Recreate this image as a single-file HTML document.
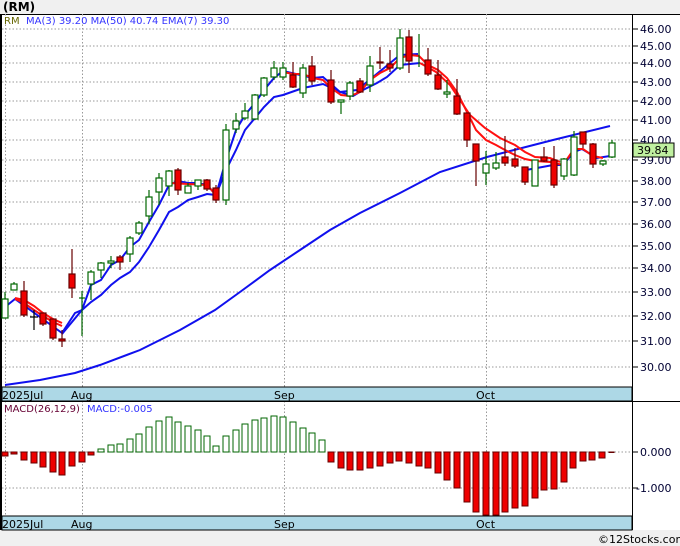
<!DOCTYPE html>
<html><head><meta charset="utf-8"><style>
html,body{margin:0;padding:0;background:#f0f0f0;}
svg{display:block;font-family:"DejaVu Sans","Liberation Sans",sans-serif;}
</style></head><body>
<svg width="680" height="546" viewBox="0 0 680 546" xmlns="http://www.w3.org/2000/svg">
<rect x="0" y="0" width="680" height="546" fill="#f0f0f0"/>
<text x="3" y="11" font-size="12" font-weight="bold" fill="#000">(RM)</text>
<rect x="0" y="14" width="680" height="516" fill="#fff"/>
<line x1="0" y1="14.5" x2="680" y2="14.5" stroke="#000"/>
<line x1="1" y1="14" x2="1" y2="530" stroke="#000" stroke-width="2"/>
<line x1="632.5" y1="14" x2="632.5" y2="530" stroke="#000"/>
<!-- grid price -->
<g stroke="#999" stroke-dasharray="1.5,2" stroke-width="1">
<line x1="2" x2="632" y1="29" y2="29"/><line x1="2" x2="632" y1="46" y2="46"/><line x1="2" x2="632" y1="63" y2="63"/>
<line x1="2" x2="632" y1="82" y2="82"/><line x1="2" x2="632" y1="101" y2="101"/><line x1="2" x2="632" y1="120" y2="120"/>
<line x1="2" x2="632" y1="140" y2="140"/><line x1="2" x2="632" y1="160" y2="160"/><line x1="2" x2="632" y1="181" y2="181"/>
<line x1="2" x2="632" y1="202" y2="202"/><line x1="2" x2="632" y1="224" y2="224"/><line x1="2" x2="632" y1="246" y2="246"/>
<line x1="2" x2="632" y1="268" y2="268"/><line x1="2" x2="632" y1="292" y2="292"/><line x1="2" x2="632" y1="316" y2="316"/>
<line x1="2" x2="632" y1="341" y2="341"/><line x1="2" x2="632" y1="367" y2="367"/>
<line x1="5.5" x2="5.5" y1="14" y2="387"/><line x1="82.5" x2="82.5" y1="14" y2="387"/><line x1="284.5" x2="284.5" y1="14" y2="387"/><line x1="486.5" x2="486.5" y1="14" y2="387"/>
<line x1="5.5" x2="5.5" y1="401" y2="516"/><line x1="82.5" x2="82.5" y1="401" y2="516"/><line x1="284.5" x2="284.5" y1="401" y2="516"/><line x1="486.5" x2="486.5" y1="401" y2="516"/>
<line x1="2" x2="632" y1="452" y2="452"/><line x1="2" x2="632" y1="488" y2="488"/>
</g>
<!-- axis labels -->
<g font-size="11" fill="#000033">
<text x="640" y="33">46.00</text><text x="640" y="50">45.00</text><text x="640" y="67">44.00</text>
<text x="640" y="86">43.00</text><text x="640" y="105">42.00</text><text x="640" y="124">41.00</text>
<text x="640" y="144">40.00</text><text x="640" y="164">39.00</text><text x="640" y="185">38.00</text>
<text x="640" y="206">37.00</text><text x="640" y="228">36.00</text><text x="640" y="250">35.00</text>
<text x="640" y="272">34.00</text><text x="640" y="296">33.00</text><text x="640" y="320">32.00</text>
<text x="640" y="345">31.00</text><text x="640" y="371">30.00</text>
<text x="640" y="456">0.000</text><text x="636" y="492">-1.000</text>
</g>
<g stroke="#000">
<line x1="632" x2="638" y1="29" y2="29"/><line x1="632" x2="638" y1="46" y2="46"/><line x1="632" x2="638" y1="63" y2="63"/><line x1="632" x2="638" y1="82" y2="82"/><line x1="632" x2="638" y1="101" y2="101"/><line x1="632" x2="638" y1="120" y2="120"/><line x1="632" x2="638" y1="140" y2="140"/><line x1="632" x2="638" y1="160" y2="160"/><line x1="632" x2="638" y1="181" y2="181"/><line x1="632" x2="638" y1="202" y2="202"/><line x1="632" x2="638" y1="224" y2="224"/><line x1="632" x2="638" y1="246" y2="246"/><line x1="632" x2="638" y1="268" y2="268"/><line x1="632" x2="638" y1="292" y2="292"/><line x1="632" x2="638" y1="316" y2="316"/><line x1="632" x2="638" y1="341" y2="341"/><line x1="632" x2="638" y1="367" y2="367"/>
<line x1="632" x2="638" y1="452" y2="452"/><line x1="632" x2="638" y1="488" y2="488"/>
</g>
<!-- date bands -->
<rect x="2" y="387" width="630" height="14" fill="#add8e6" stroke="#000"/>
<rect x="2" y="516" width="630" height="14" fill="#add8e6" stroke="#000"/>
<line x1="0" y1="401.5" x2="680" y2="401.5" stroke="#000"/>
<g font-size="11" fill="#000">
<text x="2" y="399">2025Jul</text><text x="71" y="399">Aug</text><text x="274" y="399">Sep</text><text x="476" y="399">Oct</text>
<text x="2" y="528">2025Jul</text><text x="71" y="528">Aug</text><text x="274" y="528">Sep</text><text x="476" y="528">Oct</text>
</g>
<text x="4" y="24" font-size="10" fill="#666600">RM</text>
<text x="26" y="24" font-size="10" fill="#3333ff">MA(3)  39.20   MA(50)  40.74   EMA(7)  39.30</text>
<text x="4" y="412" font-size="10" fill="#660033">MACD(26,12,9)</text>
<text x="87" y="412" font-size="10" fill="#3333ff">MACD:-0.005</text>
<text x="598" y="543" font-size="11" fill="#000">©12Stocks.com</text>
<!-- MA50 -->
<polyline fill="none" stroke="#1010ee" stroke-width="2" points="5,385 40,380 75,373 100,365 140,350 180,330 215,310 240,292 270,270 300,250 330,230 360,213 400,193 440,172 487,157 553,140 610,126"/>
<!-- slow blue -->
<polyline fill="none" stroke="#1010ee" stroke-width="2" points="62,334 72,322 82,310 91,302 101,295 111,285 120,278 130,272 139,262 149,247 159,230 169,212 178,207 188,200 198,197 207,194 216,195 226,170 236,150 245,130 255,118 264,107 274,97 283,95 303,88 323,84 340,92 353,96 363,90 377,83 387,77 400,65 420,63"/>
<!-- fast blue -->
<polyline fill="none" stroke="#1010ee" stroke-width="2" points="5,307 15,299 62,333 75,313 82,310 91,285 101,280 111,265 120,260 130,247 139,240 149,222 159,205 169,185 178,181 188,183 198,183 207,185 216,195 226,160 236,130 245,115 255,103 264,90 274,78 283,71 313,78 323,77 340,92 357,90 373,77 400,55 418,54"/>
<polyline fill="none" stroke="#1010ee" stroke-width="2" points="526,170 537,168 553,165 563,165 574,152 582,149 597,158 610,156"/>
<!-- red -->
<g fill="none" stroke="#ff1010" stroke-width="2">
<polyline points="15,298 24,300 34,306 43,313 53,319 62,323"/>
<polyline points="15,299 24,303 34,310 43,316 53,322 62,326"/>
<polyline points="170,183 188,184 207,185 216,195"/>
<polyline points="283,72 293,74 303,74 313,78 323,80 331,88 341,95 350,96 360,92 370,80 380,73 390,68 400,58 410,55 419,56 428,65 438,70 447,78 457,92 467,112 476,130 486,140 496,145 505,150 515,155 525,159 535,161 550,162 563,165 574,149 583,149 593,156 603,158"/>
<polyline points="420,63 436,72 450,85 460,100 470,115 485,128 500,138 515,145 525,152 535,157 550,158 560,162"/>
</g>
<!-- candles -->
<g stroke-width="1.2">
<g stroke="#006600" fill="#fff">
<line x1="5" x2="5" y1="292" y2="318"/><rect x="2" y="299" width="6" height="19"/>
<line x1="14" x2="14" y1="282" y2="290"/><rect x="11" y="284" width="6" height="6"/>
<line x1="82" x2="82" y1="291" y2="336"/><line x1="79" x2="85" y1="298" y2="298"/>
<line x1="91" x2="91" y1="270" y2="300"/><rect x="88" y="272" width="6" height="12"/>
<line x1="101" x2="101" y1="262" y2="278"/><rect x="98" y="263" width="6" height="7"/>
<line x1="111" x2="111" y1="256" y2="268"/><rect x="108" y="261" width="6" height="2"/>
<line x1="130" x2="130" y1="236" y2="262"/><rect x="127" y="238" width="6" height="16"/>
<line x1="139" x2="139" y1="221" y2="235"/><rect x="136" y="223" width="6" height="10"/>
<line x1="149" x2="149" y1="190" y2="224"/><rect x="146" y="197" width="6" height="19"/>
<line x1="159" x2="159" y1="173" y2="205"/><rect x="156" y="178" width="6" height="14"/>
<line x1="169" x2="169" y1="170" y2="196"/><rect x="166" y="171" width="6" height="15"/>
<line x1="188" x2="188" y1="183" y2="193"/><rect x="185" y="186" width="6" height="7"/>
<line x1="198" x2="198" y1="180" y2="190"/><rect x="195" y="180" width="6" height="6"/>
<line x1="226" x2="226" y1="124" y2="205"/><rect x="223" y="130" width="6" height="70"/>
<line x1="236" x2="236" y1="113" y2="133"/><rect x="233" y="121" width="6" height="8"/>
<line x1="245" x2="245" y1="103" y2="120"/><rect x="242" y="111" width="6" height="7"/>
<line x1="255" x2="255" y1="94" y2="120"/><rect x="252" y="95" width="6" height="24"/>
<line x1="264" x2="264" y1="77" y2="97"/><rect x="261" y="78" width="6" height="17"/>
<line x1="274" x2="274" y1="61" y2="80"/><rect x="271" y="68" width="6" height="9"/>
<line x1="283" x2="283" y1="62" y2="80"/><rect x="280" y="68" width="6" height="9"/>
<line x1="303" x2="303" y1="64" y2="98"/><rect x="300" y="68" width="6" height="25"/>
<line x1="341" x2="341" y1="100" y2="114"/><rect x="338" y="100" width="6" height="2"/>
<line x1="350" x2="350" y1="81" y2="100"/><rect x="347" y="83" width="6" height="13"/>
<line x1="370" x2="370" y1="56" y2="92"/><rect x="367" y="66" width="6" height="19"/>
<line x1="400" x2="400" y1="29" y2="70"/><rect x="397" y="38" width="6" height="30"/>
<line x1="419" x2="419" y1="34" y2="67"/>
<line x1="447" x2="447" y1="80" y2="98"/><rect x="444" y="92" width="6" height="2"/>
<line x1="486" x2="486" y1="151" y2="185"/><rect x="483" y="164" width="6" height="9"/>
<line x1="496" x2="496" y1="152" y2="170"/><rect x="493" y="163" width="6" height="5"/>
<line x1="535" x2="535" y1="160" y2="186"/><rect x="532" y="160" width="6" height="26"/>
<line x1="564" x2="564" y1="158" y2="180"/><rect x="561" y="159" width="6" height="17"/>
<line x1="574" x2="574" y1="131" y2="176"/><rect x="571" y="137" width="6" height="38"/>
<line x1="603" x2="603" y1="160" y2="166"/><rect x="600" y="161" width="6" height="3"/>
<line x1="612" x2="612" y1="140" y2="158"/><rect x="609" y="143" width="6" height="14"/>
</g>
<line x1="34" x2="34" y1="310" y2="330" stroke="#000"/><line x1="30" x2="38" y1="317" y2="317" stroke="#000"/>
<g stroke="#660000" fill="#ee0000">
<line x1="24" x2="24" y1="281" y2="317"/><rect x="21" y="291" width="6" height="24"/>
<line x1="43" x2="43" y1="313" y2="326"/><rect x="40" y="313" width="6" height="11"/>
<line x1="53" x2="53" y1="319" y2="340"/><rect x="50" y="319" width="6" height="19"/>
<line x1="62" x2="62" y1="330" y2="347"/><rect x="59" y="339" width="6" height="2"/>
<line x1="72" x2="72" y1="249" y2="298"/><rect x="69" y="274" width="6" height="14"/>
<line x1="120" x2="120" y1="255" y2="270"/><rect x="117" y="257" width="6" height="5"/>
<line x1="178" x2="178" y1="168" y2="195"/><rect x="175" y="170" width="6" height="20"/>
<line x1="207" x2="207" y1="179" y2="191"/><rect x="204" y="180" width="6" height="9"/>
<line x1="216" x2="216" y1="185" y2="203"/><rect x="213" y="188" width="6" height="12"/>
<line x1="293" x2="293" y1="62" y2="88"/><rect x="290" y="75" width="6" height="12"/>
<line x1="312" x2="312" y1="56" y2="85"/><rect x="309" y="66" width="6" height="15"/>
<line x1="331" x2="331" y1="70" y2="104"/><rect x="328" y="80" width="6" height="22"/>
<line x1="360" x2="360" y1="78" y2="93"/><rect x="357" y="81" width="6" height="11"/>
<line x1="380" x2="380" y1="47" y2="69"/><rect x="377" y="62" width="6" height="1"/>
<line x1="390" x2="390" y1="50" y2="72"/><rect x="387" y="64" width="6" height="4"/>
<line x1="409" x2="409" y1="30" y2="73"/><rect x="406" y="37" width="6" height="24"/>
<line x1="428" x2="428" y1="48" y2="76"/><rect x="425" y="60" width="6" height="14"/>
<line x1="438" x2="438" y1="60" y2="90"/><rect x="435" y="75" width="6" height="14"/>
<line x1="457" x2="457" y1="79" y2="115"/><rect x="454" y="96" width="6" height="18"/>
<line x1="467" x2="467" y1="113" y2="147"/><rect x="464" y="113" width="6" height="27"/>
<line x1="476" x2="476" y1="144" y2="186"/><rect x="473" y="144" width="6" height="17"/>
<line x1="505" x2="505" y1="136" y2="166"/><rect x="502" y="157" width="6" height="6"/>
<line x1="515" x2="515" y1="148" y2="168"/><rect x="512" y="159" width="6" height="7"/>
<line x1="525" x2="525" y1="167" y2="185"/><rect x="522" y="167" width="6" height="15"/>
<line x1="544" x2="544" y1="147" y2="162"/><rect x="541" y="157" width="6" height="4"/>
<line x1="554" x2="554" y1="146" y2="188"/><rect x="551" y="160" width="6" height="25"/>
<line x1="583" x2="583" y1="132" y2="148"/><rect x="580" y="132" width="6" height="12"/>
<line x1="593" x2="593" y1="143" y2="168"/><rect x="590" y="144" width="6" height="20"/>
</g>
</g>
<!-- current price box -->
<rect x="633" y="143" width="41" height="14" fill="#c0f0a0" stroke="#000"/>
<text x="637" y="154" font-size="11" fill="#000">39.84</text>
<!-- MACD bars -->
<g stroke-width="1">
<g stroke="#660000" fill="#ee0000">
<rect x="2" y="452" width="6" height="4"/><rect x="11" y="452" width="6" height="2"/><rect x="21" y="452" width="6" height="8"/><rect x="31" y="452" width="6" height="11"/><rect x="40" y="452" width="6" height="15"/><rect x="50" y="452" width="6" height="20"/><rect x="59" y="452" width="6" height="23"/><rect x="69" y="452" width="6" height="14"/><rect x="79" y="452" width="6" height="10"/><rect x="88" y="452" width="6" height="3"/>
<rect x="328" y="452" width="6" height="10"/><rect x="338" y="452" width="6" height="16"/><rect x="347" y="452" width="6" height="18"/><rect x="357" y="452" width="6" height="18"/><rect x="367" y="452" width="6" height="16"/><rect x="377" y="452" width="6" height="14"/><rect x="387" y="452" width="6" height="11"/><rect x="396" y="452" width="6" height="9"/><rect x="406" y="452" width="6" height="11"/><rect x="416" y="452" width="6" height="14"/><rect x="425" y="452" width="6" height="16"/><rect x="435" y="452" width="6" height="21"/><rect x="444" y="452" width="6" height="28"/><rect x="454" y="452" width="6" height="36"/><rect x="464" y="452" width="6" height="50"/><rect x="473" y="452" width="6" height="60"/><rect x="483" y="452" width="6" height="63"/><rect x="493" y="452" width="6" height="63"/><rect x="502" y="452" width="6" height="60"/><rect x="512" y="452" width="6" height="56"/><rect x="522" y="452" width="6" height="54"/><rect x="532" y="452" width="6" height="46"/><rect x="541" y="452" width="6" height="38"/><rect x="551" y="452" width="6" height="37"/><rect x="561" y="452" width="6" height="30"/><rect x="570" y="452" width="6" height="16"/><rect x="580" y="452" width="6" height="9"/><rect x="589" y="452" width="6" height="8"/><rect x="599" y="452" width="6" height="6"/><rect x="609" y="452" width="5" height="0.5"/>
</g>
<g stroke="#006600" fill="#fff">
<rect x="98" y="449" width="6" height="3"/><rect x="108" y="445" width="6" height="7"/><rect x="117" y="444" width="6" height="8"/><rect x="127" y="439" width="6" height="13"/><rect x="136" y="434" width="6" height="18"/><rect x="146" y="427" width="6" height="25"/><rect x="156" y="421" width="6" height="31"/><rect x="166" y="417" width="6" height="35"/><rect x="175" y="422" width="6" height="30"/><rect x="185" y="426" width="6" height="26"/><rect x="195" y="430" width="6" height="22"/><rect x="204" y="436" width="6" height="16"/><rect x="213" y="446" width="6" height="6"/><rect x="223" y="436" width="6" height="16"/><rect x="233" y="430" width="6" height="22"/><rect x="242" y="424" width="6" height="28"/><rect x="252" y="420" width="6" height="32"/><rect x="261" y="418" width="6" height="34"/><rect x="271" y="416" width="6" height="36"/><rect x="280" y="417" width="6" height="35"/><rect x="290" y="422" width="6" height="30"/><rect x="300" y="428" width="6" height="24"/><rect x="309" y="433" width="6" height="19"/><rect x="319" y="440" width="6" height="12"/>
</g>
</g>
</svg>
</body></html>
